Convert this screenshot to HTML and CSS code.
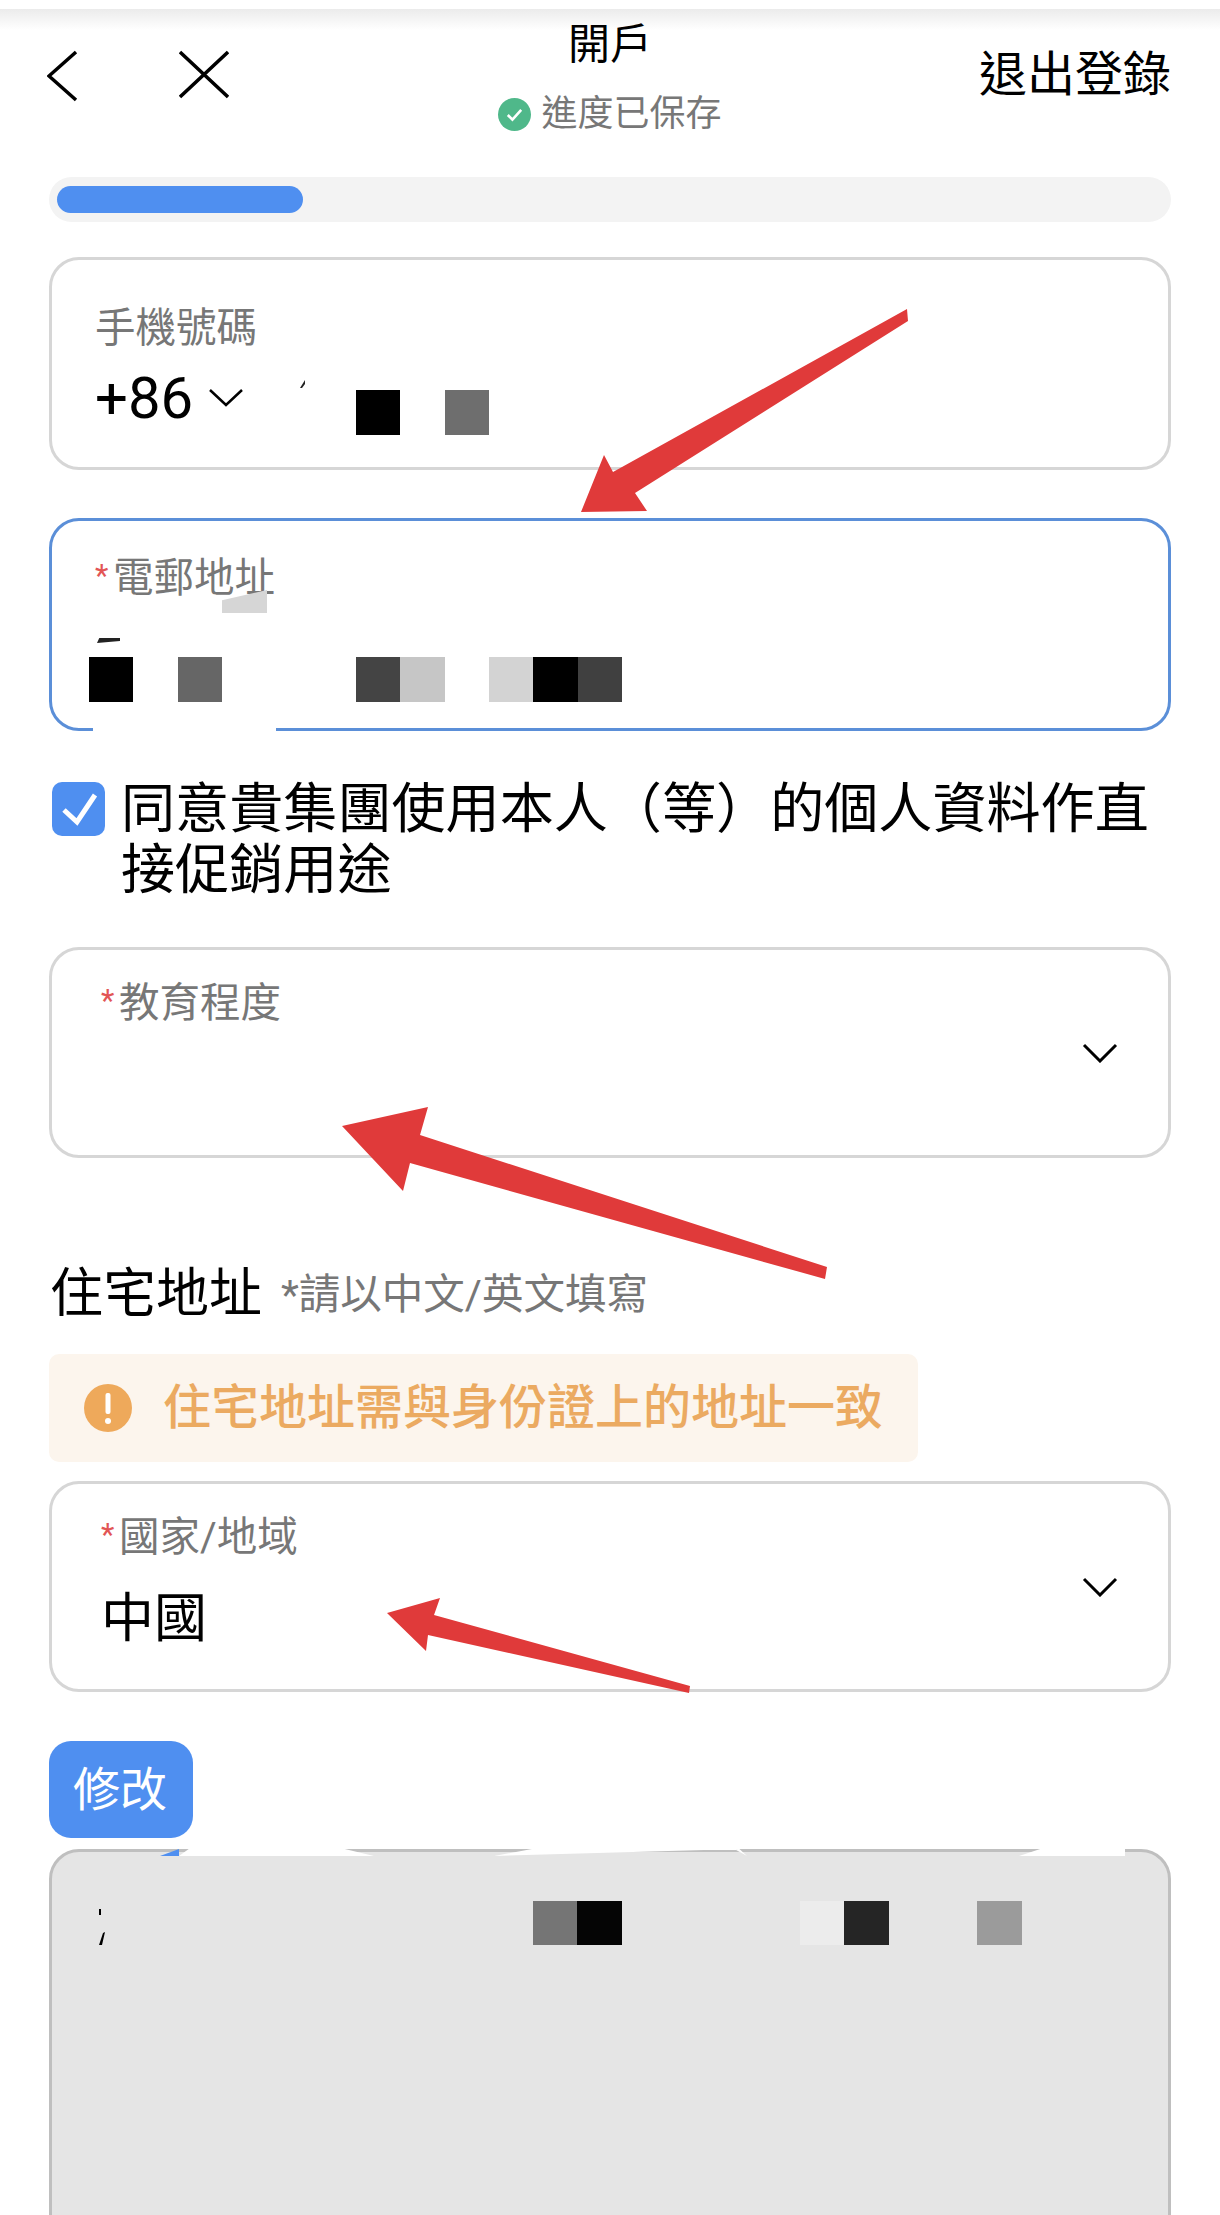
FILE: index.html
```html
<!DOCTYPE html>
<html lang="zh-Hant">
<head>
<meta charset="utf-8">
<title>開戶</title>
<link rel="stylesheet" href="styles.css">
</head>
<body>
<main class="page">
  <header class="header">
    <div class="nav">
      <svg class="icon-back" viewBox="0 0 31 52"><polyline points="29,2 2,26 29,50"/></svg>
      <svg class="icon-close" viewBox="0 0 50 49"><path d="M1 2 49 47M49 2 1 47"/></svg>
    </div>
    <div class="title-block">
      <div class="title">開戶</div>
      <div class="saved">
        <svg class="icon-saved" viewBox="0 0 32 32"><circle cx="16" cy="16" r="16"/><polyline points="9.5,16.5 14,21 22.5,11.5"/></svg>
        <span>進度已保存</span>
      </div>
    </div>
    <div class="logout">退出登錄</div>
  </header>

  <div class="progress"><div class="progress-fill"></div></div>

  <section class="card card-phone">
    <div class="label">手機號碼</div>
    <div class="phone-row">
      <span class="dial">+86</span>
      <svg class="chevron-small" viewBox="0 0 36 20"><polyline points="2,3 18,18 34,3"/></svg>
      <span class="tick"></span>
      <div class="mosaic mosaic-phone"><i class="m-000"></i><i></i><i class="m-6e"></i></div>
    </div>
  </section>

  <section class="card card-email">
    <div class="label"><span class="star">*</span>電郵地址</div>
    <div class="smudge"></div>
    <div class="dash"></div>
    <div class="mosaic mosaic-email"><i class="m-000"></i><i></i><i class="m-66"></i><i></i><i></i><i></i><i class="m-44"></i><i class="m-c6"></i><i></i><i class="m-d3"></i><i class="m-000"></i><i class="m-40"></i></div>
    <div class="erase-email"></div>
  </section>

  <div class="consent">
    <span class="checkbox"><svg viewBox="0 0 53 54"><polyline points="12,28 25,40 43,13"/></svg></span>
    <p class="consent-text">同意貴集團使用本人（等）的個人資料作直接促銷用途</p>
  </div>

  <section class="card select select-edu">
    <div class="select-body">
      <div class="label"><span class="star">*</span>教育程度</div>
    </div>
    <svg class="chevron" viewBox="0 0 36 20"><polyline points="2,2 18,18 34,2"/></svg>
  </section>

  <div class="section-head">
    <h2 class="section-title">住宅地址</h2>
    <span class="section-note">*請以中文/英文填寫</span>
  </div>

  <div class="alert">
    <svg class="icon-alert" viewBox="0 0 48 48"><circle cx="24" cy="24" r="24"/><rect x="21.5" y="9" width="5" height="21" rx="2"/><circle cx="24" cy="37" r="3"/></svg>
    <span>住宅地址需與身份證上的地址一致</span>
  </div>

  <section class="card select select-country">
    <div class="select-body">
      <div class="label"><span class="star">*</span>國家/地域</div>
      <div class="value">中國</div>
    </div>
    <svg class="chevron" viewBox="0 0 36 20"><polyline points="2,2 18,18 34,2"/></svg>
  </section>

  <button class="btn-edit" type="button">修改</button>

  <section class="card card-address">
    <div class="erase erase-a"></div>
    <div class="erase erase-b"></div>
    <div class="erase erase-c"></div>
    <div class="sliver"></div>
    <div class="address-row">
      <svg class="mark" viewBox="0 0 8 36"><path d="M2 0 4 0 4 6 2 6ZM6 24 8 23 5 36 2 36Z"/></svg>
      <div class="mosaic mosaic-address"><i class="m-75"></i><i class="m-05"></i><i></i><i></i><i></i><i></i><i class="m-ec"></i><i class="m-25"></i><i></i><i></i><i class="m-9b"></i></div>
    </div>
  </section>

  <svg class="annotations" viewBox="0 0 1220 2215">
    <polygon points="907,309 908,321 635,493 647,511 581,512 604,455 613,472"/>
    <polygon points="342,1126 428,1107 420,1135 827,1267 825,1279 410,1163 403,1191"/>
    <polygon points="387,1613 440,1598 434,1615 690,1686 689,1693 428,1635 426,1651"/>
  </svg>
</main>
</body>
</html>
```

FILE: styles.css
```css
* {
  box-sizing: border-box;
}

html,
body {
  margin: 0;
  padding: 0;
  background: #fff;
}

.page {
  position: relative;
  width: 1220px;
  height: 2215px;
  overflow: hidden;
  padding: 0 49px;
  font-family: Roboto, "Noto Sans CJK TC", sans-serif;
  color: #000;
  background: linear-gradient(#ebebeb, #fff) no-repeat 0 9px / 100% 21px;
}

/* Header */
.header {
  display: grid;
  grid-template-columns: 1fr auto 1fr;
  align-items: start;
  padding-top: 24px;
  height: 129px;
}

.nav {
  display: flex;
  align-items: flex-start;
  gap: 101px;
  margin-left: -2px;
  padding-top: 26px;
}

.icon-back {
  width: 31px;
  height: 52px;
  fill: none;
  stroke: #000;
  stroke-width: 3.5;
}

.icon-close {
  width: 50px;
  height: 49px;
  fill: none;
  stroke: #000;
  stroke-width: 3.5;
}

.title-block {
  display: flex;
  flex-direction: column;
  align-items: center;
}

.title {
  font-size: 42px;
  line-height: 42px;
}

.saved {
  display: flex;
  align-items: center;
  gap: 10px;
  margin-top: 30px;
  font-size: 36px;
  line-height: 36px;
  color: #777;
}

.icon-saved {
  width: 33px;
  height: 33px;
}

.icon-saved circle {
  fill: #4fb88a;
}

.icon-saved polyline {
  fill: none;
  stroke: #fff;
  stroke-width: 2.5;
}

.logout {
  justify-self: end;
  margin-top: 27px;
  font-size: 48px;
  line-height: 48px;
}

/* Progress */
.progress {
  height: 45px;
  margin-top: 48px;
  padding: 9px 0 9px 8px;
  border-radius: 23px;
  background: #f3f3f3;
}

.progress-fill {
  width: 246px;
  height: 27px;
  border-radius: 14px;
  background: #4f8ff0;
}

/* Field cards */
.card {
  position: relative;
  border: 3px solid #d6d6d6;
  border-radius: 30px;
  background: #fff;
}

.label {
  font-size: 40.5px;
  line-height: 40px;
  color: #777;
}

.star {
  display: inline-block;
  width: 18px;
  font-size: 31px;
  line-height: 28px;
  vertical-align: 6px;
  color: #e25555;
}

.card-phone {
  height: 213px;
  margin-top: 35px;
  padding: 48px 0 0 43px;
}

.phone-row {
  display: flex;
  align-items: flex-start;
  margin-top: 21px;
}

.dial {
  width: 99px;
  font-size: 58px;
  line-height: 58px;
}

.chevron-small {
  width: 36px;
  height: 20px;
  margin: 18px 0 0 14px;
  fill: none;
  stroke: #000;
  stroke-width: 2.5;
}

.tick {
  width: 5px;
  height: 8px;
  margin: 11px 0 0 56px;
  background: #222;
  clip-path: polygon(100% 0, 100% 50%, 40% 100%, 0 100%);
}

.mosaic {
  display: grid;
  grid-auto-flow: column;
  grid-auto-columns: 44.44px;
}

.mosaic-phone {
  height: 45px;
  margin: 21px 0 0 51px;
}

.m-000 { background: #000; }
.m-05 { background: #050505; }
.m-25 { background: #252525; }
.m-40 { background: #404040; }
.m-44 { background: #444; }
.m-66 { background: #666; }
.m-6e { background: #6e6e6e; }
.m-75 { background: #757575; }
.m-9b { background: #9b9b9b; }
.m-c6 { background: #c6c6c6; }
.m-d3 { background: #d3d3d3; }
.m-ec { background: #ececec; }

.card-email {
  height: 213px;
  margin-top: 48px;
  padding: 37px 0 0 43px;
  border-color: #5b8fd8;
}

.smudge {
  width: 45px;
  height: 23px;
  margin: -8px 0 0 127px;
  background: #d6d6d6;
  clip-path: polygon(100% 0, 100% 100%, 0 100%, 0 45%);
}

.dash {
  width: 23px;
  height: 5px;
  margin: 25px 0 0 2px;
  background: #222;
  clip-path: polygon(10% 0, 100% 0, 100% 60%, 0 100%);
}

.mosaic-email {
  height: 45px;
  margin: 14px 0 0 -6px;
}

.erase-email {
  position: absolute;
  left: 41px;
  bottom: -4px;
  width: 183px;
  height: 6px;
  background: #fff;
}

/* Consent */
.consent {
  display: flex;
  align-items: flex-start;
  gap: 16px;
  margin: 45px 0 0 3px;
}

.checkbox {
  flex: none;
  width: 53px;
  height: 54px;
  margin-top: 6px;
  border-radius: 10px;
  background: #4f8ff0;
}

.checkbox svg {
  display: block;
  width: 53px;
  height: 54px;
  fill: none;
  stroke: #fff;
  stroke-width: 5;
}

.consent-text {
  width: 1040px;
  margin: 3px 0 0;
  font-size: 54.1px;
  line-height: 61px;
}

/* Selects */
.select {
  display: flex;
  justify-content: space-between;
  align-items: center;
  height: 211px;
  padding: 0 50px 0 49px;
}

.select-body {
  align-self: flex-start;
  padding-top: 33px;
}

.chevron {
  width: 36px;
  height: 20px;
  fill: none;
  stroke: #000;
  stroke-width: 3;
}

.select-edu {
  margin-top: 46px;
}

.section-head {
  display: flex;
  align-items: center;
  gap: 19px;
  margin-top: 110px;
  padding-left: 1px;
}

.section-title {
  margin: 0;
  font-size: 53px;
  line-height: 53px;
  font-weight: 400;
}

.section-note {
  font-size: 41.5px;
  line-height: 40px;
  color: #777;
}

.alert {
  display: flex;
  align-items: center;
  gap: 31px;
  width: 869px;
  height: 108px;
  margin-top: 33px;
  padding-left: 35px;
  border-radius: 10px;
  background: #fcf5ed;
  font-size: 48px;
  line-height: 48px;
  font-weight: 500;
  color: #ebaa61;
}

.icon-alert {
  flex: none;
  width: 48px;
  height: 48px;
}

.icon-alert circle:first-child {
  fill: #eea95b;
}

.icon-alert rect,
.icon-alert circle:last-child {
  fill: #fff;
}

.select-country {
  margin-top: 19px;
}

.value {
  margin-top: 36px;
  font-size: 53px;
  line-height: 53px;
}

/* Edit button */
.btn-edit {
  display: block;
  width: 144px;
  height: 97px;
  margin-top: 49px;
  padding: 0 2px 0 0;
  border: 0;
  border-radius: 22px;
  background: #4f8ff0;
  font-family: inherit;
  font-size: 47px;
  line-height: 47px;
  color: #fff;
}

/* Address */
.card-address {
  height: 400px;
  margin-top: 11px;
  padding-top: 49px;
  border-color: #bfbfbf;
  background: #e5e5e5;
}

.address-row {
  display: flex;
  align-items: flex-start;
  padding-left: 45px;
}

.mark {
  flex: none;
  width: 8px;
  height: 36px;
  margin-top: 8px;
  fill: #000;
}

.mosaic-address {
  height: 44px;
  margin-left: 428px;
}

.erase,
.sliver {
  position: absolute;
  top: -3px;
  height: 7px;
}

.erase {
  background: #fff;
}

.erase-a {
  left: 127px;
  width: 195px;
  clip-path: polygon(0 100%, 5% 0, 85% 0, 100% 100%);
}

.erase-b {
  left: 442px;
  width: 253px;
  clip-path: polygon(0 100%, 15% 0, 95% 0, 100% 100%, 97% 0);
}

.erase-c {
  left: 967px;
  width: 106px;
  clip-path: polygon(0 100%, 20% 0, 100% 0, 100% 100%);
}

.sliver {
  left: 108px;
  width: 19px;
  background: #4f8ff0;
  clip-path: polygon(100% 0, 100% 100%, 0 100%);
}

/* Red annotation arrows */
.annotations {
  position: absolute;
  top: 0;
  left: 0;
  width: 1220px;
  height: 2215px;
  fill: #e03a3a;
  pointer-events: none;
}
```
